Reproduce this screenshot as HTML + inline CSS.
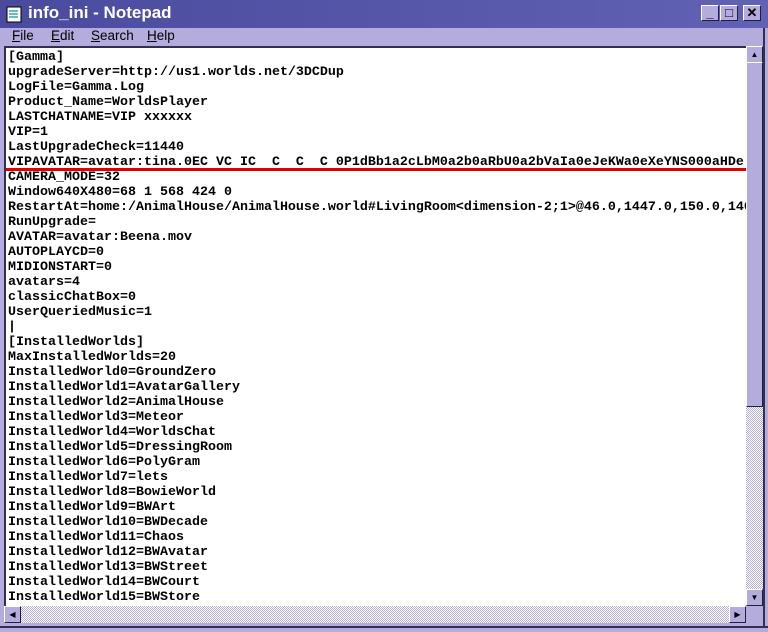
<!DOCTYPE html>
<html><head><style>
body{margin:0;width:768px;height:632px;overflow:hidden;background:#b4acdc;font-family:"Liberation Sans",sans-serif;position:relative}
.abs{position:absolute}
.title{left:0;top:0;width:768px;height:28px;background:linear-gradient(90deg,#4a4a9e,#6262b4);}
.title span{position:absolute;left:28px;top:3px;color:#fff;font-weight:bold;font-size:17px}
.btn{top:5px;width:18px;height:16px;background:#b4acdc;border:1px solid;border-color:#fff #202040 #202040 #fff;box-sizing:border-box;font:bold 13px "Liberation Sans";text-align:center;line-height:14px;color:#000}
.menu{top:28px;font-size:13.5px;color:#000}
.edit{left:4px;top:46px;width:742px;height:560px;background:#fff;border-top:2px solid #303050;border-left:2px solid #303050;box-sizing:border-box;overflow:hidden}
pre{margin:0;position:absolute;left:2px;top:2px;font:bold 13.33px/15px "Liberation Mono",monospace;color:#000}
.vs{left:746px;top:46px;width:17px;height:560px;background:repeating-conic-gradient(#fff 0 25%,#b4acdc 0 50%) 0 0/2px 2px}
.hs{left:4px;top:606px;width:742px;height:17px;background:repeating-conic-gradient(#fff 0 25%,#b4acdc 0 50%) 0 0/2px 2px}
.sb{width:17px;height:17px;background:#b4acdc;border:1px solid;border-color:#fff #202040 #202040 #fff;box-sizing:border-box;font-size:8px;text-align:center;line-height:15px}
</style></head><body>
<div class="abs title"><svg class="abs" style="left:5px;top:5px" width="18" height="18"><rect x="2" y="2" width="14" height="15" fill="#fff" stroke="#000"/><path d="M4 6h9M4 9h9M4 12h9" stroke="#3aa" stroke-width="1.5"/></svg><span>info_ini - Notepad</span>
<div class="abs btn" style="left:701px">_</div><div class="abs btn" style="left:720px">□</div><div class="abs btn" style="left:743px">✕</div></div>
<div class="abs menu" style="left:12px"><u>F</u>ile</div>
<div class="abs menu" style="left:51px"><u>E</u>dit</div>
<div class="abs menu" style="left:91px"><u>S</u>earch</div>
<div class="abs menu" style="left:147px"><u>H</u>elp</div>
<div class="abs edit"><pre>[Gamma]
upgradeServer=http://us1.worlds.net/3DCDup
LogFile=Gamma.Log
Product_Name=WorldsPlayer
LASTCHATNAME=VIP xxxxxx
VIP=1
LastUpgradeCheck=11440
VIPAVATAR=avatar:tina.0EC VC IC  C  C  C 0P1dBb1a2cLbM0a2b0aRbU0a2bVaIa0eJeKWa0eXeYNS000aHDe
CAMERA_MODE=32
Window640X480=68 1 568 424 0
RestartAt=home:/AnimalHouse/AnimalHouse.world#LivingRoom&lt;dimension-2;1&gt;@46.0,1447.0,150.0,140
RunUpgrade=
AVATAR=avatar:Beena.mov
AUTOPLAYCD=0
MIDIONSTART=0
avatars=4
classicChatBox=0
UserQueriedMusic=1
|
[InstalledWorlds]
MaxInstalledWorlds=20
InstalledWorld0=GroundZero
InstalledWorld1=AvatarGallery
InstalledWorld2=AnimalHouse
InstalledWorld3=Meteor
InstalledWorld4=WorldsChat
InstalledWorld5=DressingRoom
InstalledWorld6=PolyGram
InstalledWorld7=lets
InstalledWorld8=BowieWorld
InstalledWorld9=BWArt
InstalledWorld10=BWDecade
InstalledWorld11=Chaos
InstalledWorld12=BWAvatar
InstalledWorld13=BWStreet
InstalledWorld14=BWCourt
InstalledWorld15=BWStore</pre>
<div class="abs" style="left:0;top:120px;width:740px;height:3px;background:#e00000"></div></div>
<div class="abs vs"><div class="abs sb" style="top:0">▲</div><div class="abs sb" style="top:16px;height:345px"></div><div class="abs sb" style="top:543px">▼</div></div>
<div class="abs hs"><div class="abs sb" style="left:0">◀</div><div class="abs sb" style="left:725px">▶</div></div>
<div class="abs" style="left:763px;top:28px;width:2px;height:600px;background:#303050"></div>
<div class="abs" style="left:0;top:626px;width:768px;height:2px;background:#303050"></div>
</body></html>
